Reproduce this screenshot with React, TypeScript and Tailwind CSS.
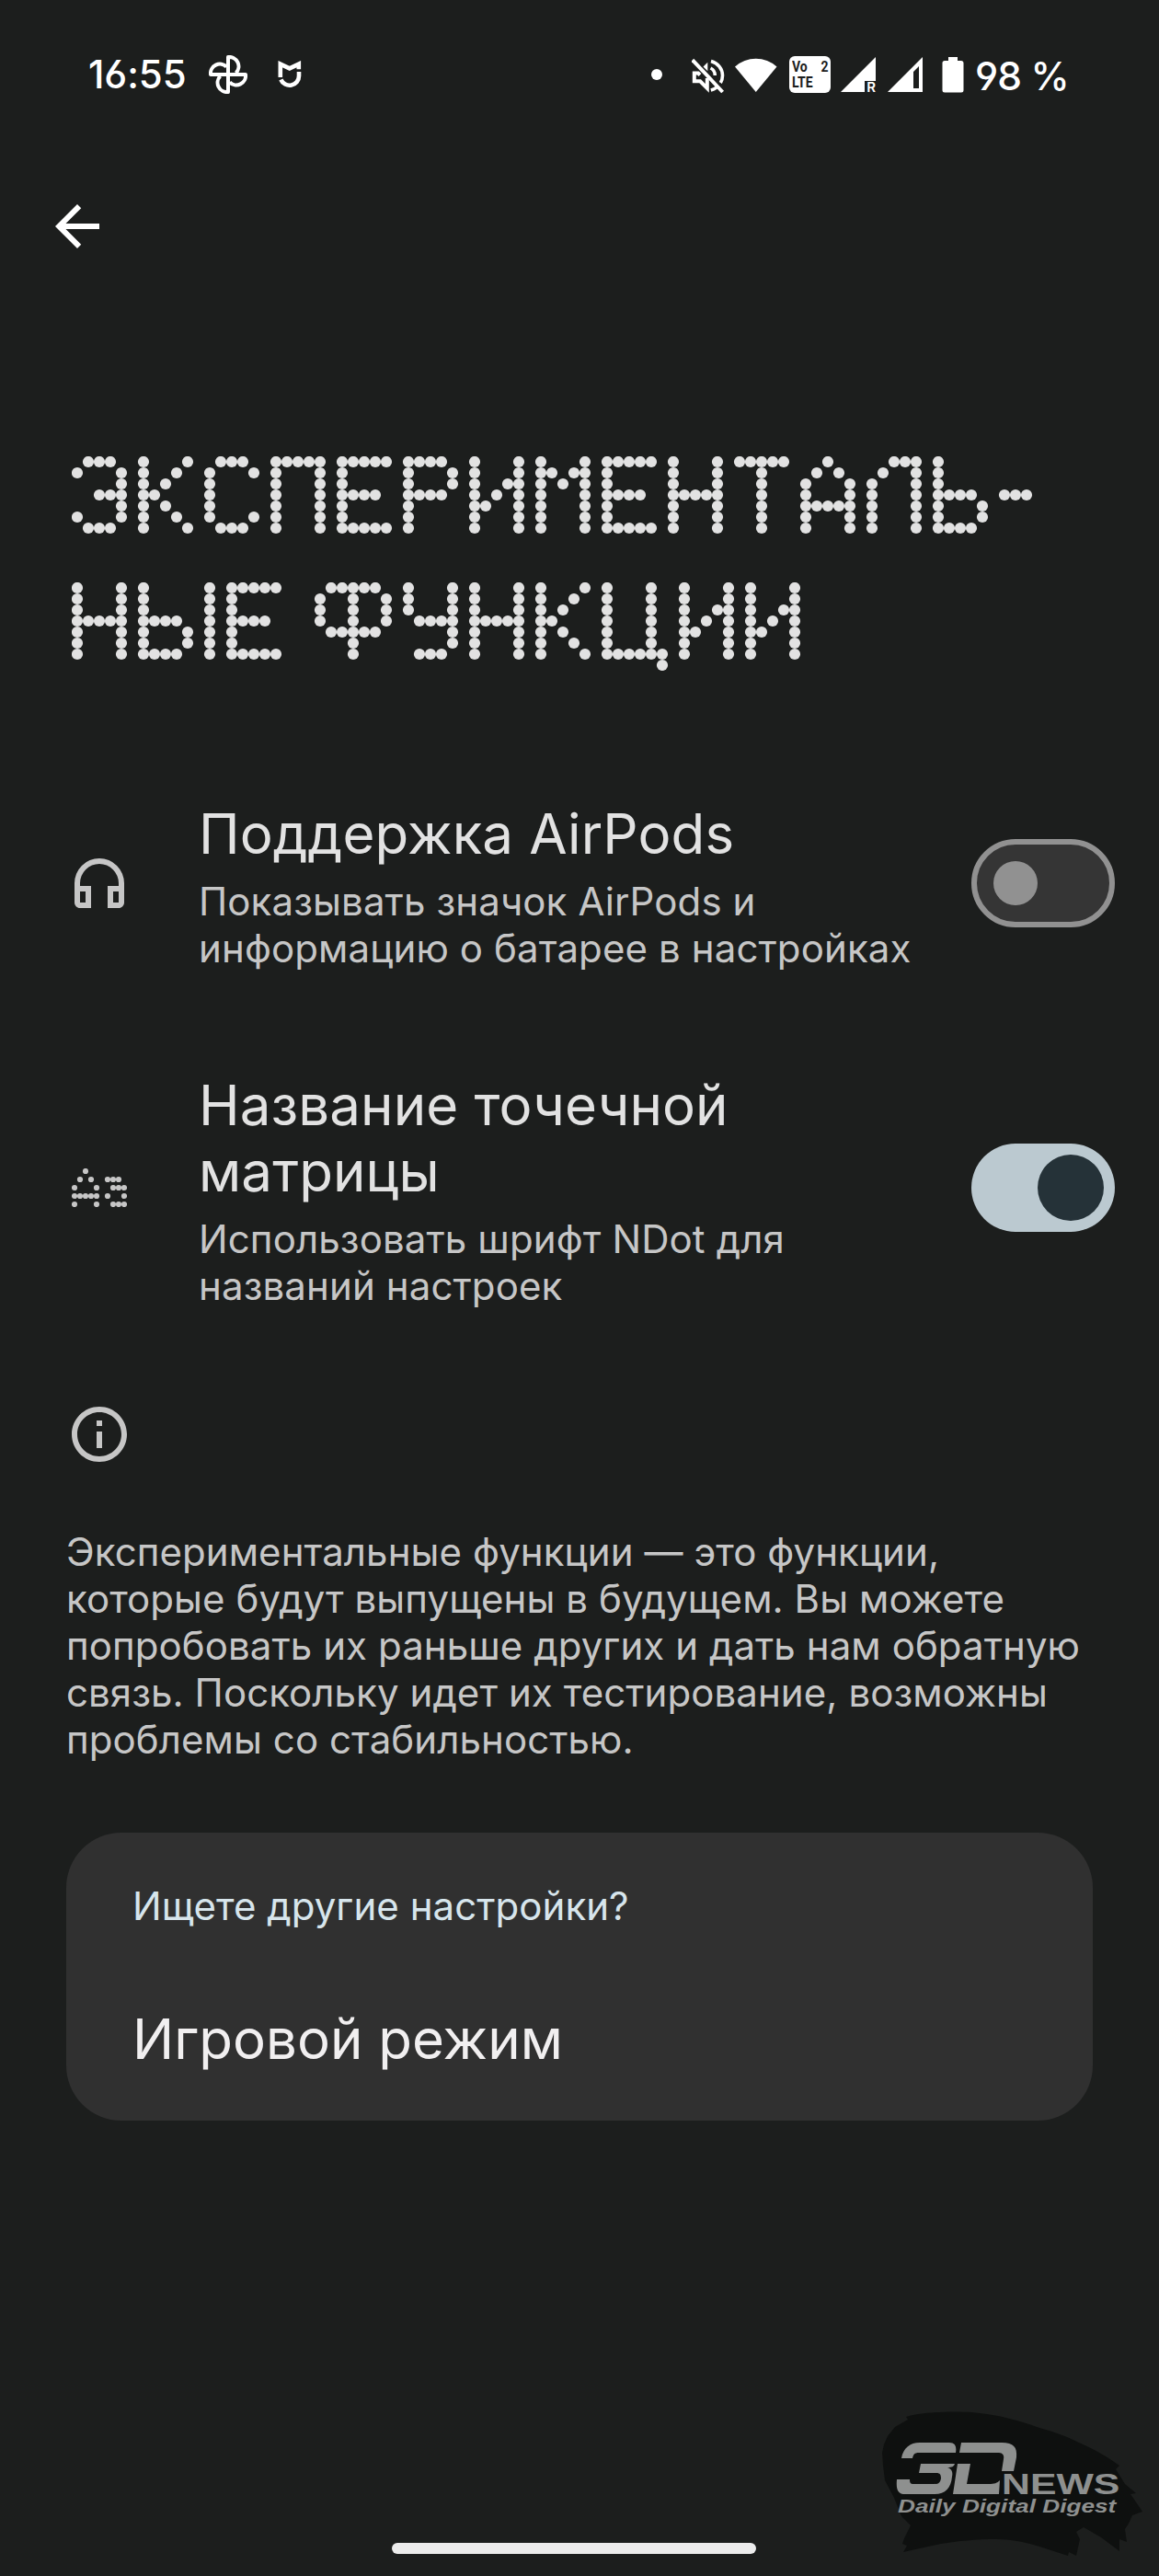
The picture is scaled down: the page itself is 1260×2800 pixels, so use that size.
import React from 'react'

// 5x7 dot font, only the letters used in the screen title
const glyphs: Record<string, string[]> = {
  'Э': ['.###.', '#...#', '....#', '..###', '....#', '#...#', '.###.'],
  'К': ['#...#', '#..#.', '#.#..', '##...', '#.#..', '#..#.', '#...#'],
  'С': ['.###.', '#...#', '#....', '#....', '#....', '#...#', '.###.'],
  'П': ['#####', '#...#', '#...#', '#...#', '#...#', '#...#', '#...#'],
  'Е': ['#####', '#....', '#....', '####.', '#....', '#....', '#####'],
  'Р': ['####.', '#...#', '#...#', '####.', '#....', '#....', '#....'],
  'И': ['#...#', '#...#', '#..##', '#.#.#', '##..#', '#...#', '#...#'],
  'М': ['#...#', '##.##', '#.#.#', '#...#', '#...#', '#...#', '#...#'],
  'Н': ['#...#', '#...#', '#...#', '#####', '#...#', '#...#', '#...#'],
  'Т': ['#####', '..#..', '..#..', '..#..', '..#..', '..#..', '..#..'],
  'А': ['..#..', '.#.#.', '#...#', '#...#', '#####', '#...#', '#...#'],
  'Л': ['..###', '.#..#', '#...#', '#...#', '#...#', '#...#', '#...#'],
  'Ь': ['#....', '#....', '#....', '####.', '#...#', '#...#', '####.'],
  'Ы': ['#.....#', '#.....#', '#.....#', '####..#', '#...#.#', '#...#.#', '####..#'],
  'Ф': ['.#####.', '#..#..#', '#..#..#', '#..#..#', '.#####.', '...#...', '...#...'],
  'У': ['#...#', '#...#', '#...#', '.####', '....#', '....#', '.###.'],
  'Ц': ['#...#.', '#...#.', '#...#.', '#...#.', '#...#.', '#...#.', '######', '.....#'],
  '-': ['...', '...', '...', '###'],
  ' ': ['.'],
}

const DotLine = ({ text }: { text: string }) => {
  let col = 0
  const dots: [number, number][] = []
  for (const ch of text) {
    const rows = glyphs[ch]
    rows.forEach((row, y) => row.split('').forEach((c, x) => c === '#' && dots.push([col + x, y])))
    col += rows[0].length + 1
  }
  return (
    <svg width={col * 12} height={96} viewBox={`0 0 ${col * 12} 96`} aria-hidden='true'>
      {dots.map(([x, y]) => <circle key={`${x}-${y}`} cx={x * 12 + 6} cy={y * 12 + 6} r={6.1} fill='#e2e2e2' />)}
    </svg>
  )
}

const ArrowBack = () => (
  <svg viewBox='0 0 24 24' className='size-[72px]' fill='#ffffff'>
    <path d='M20 11H7.83l5.59-5.59L12 4l-8 8 8 8 1.41-1.41L7.83 13H20v-2z' />
  </svg>
)

const Headphones = () => (
  <svg viewBox='0 0 24 24' className='size-[72px]' fill='#c6c6c6'>
    <path d='M12 3a9 9 0 0 0-9 9v7c0 1.1.9 2 2 2h4v-8H5v-1a7 7 0 0 1 14 0v1h-4v8h4c1.1 0 2-.9 2-2v-7a9 9 0 0 0-9-9zM7 15v4H5v-4h2zm12 4h-2v-4h2v4z' />
  </svg>
)

const dotIcon = ['..#.......', '.#.#..###.', '#...#..###', '#####.#..#', '#...#..###']

const DotFont = () => (
  <svg viewBox='0 0 60 42' className='h-[42px] w-[60px]' fill='#c6c6c6'>
    {dotIcon.map((row, y) => row.split('').map((c, x) => c === '#' && (
      <circle key={`${x}-${y}`} cx={x * 6 + 3} cy={y * 9 + 3} r={3.1} />
    )))}
  </svg>
)

const Info = () => (
  <svg viewBox='0 0 24 24' className='size-[72px]' fill='#c6c6c6'>
    <path d='M11 7h2v2h-2zm0 4h2v6h-2zm1-9C6.48 2 2 6.48 2 12s4.48 10 10 10 10-4.48 10-10S17.52 2 12 2zm0 18c-4.41 0-8-3.59-8-8s3.59-8 8-8 8 3.59 8 8-3.59 8-8 8z' />
  </svg>
)

const Pinwheel = () => (
  <svg viewBox='0 0 42 42' className='size-[42px]' fill='none' stroke='#fff' strokeWidth='4' strokeLinejoin='round'>
    <path d='M21 21V2a10.2 10.2 0 0 1 8.5 17.3M21 21h19a10.2 10.2 0 0 1-17.3 8.5M21 21v19a10.2 10.2 0 0 1-8.5-17.3M21 21H2a10.2 10.2 0 0 1 17.3-8.5' />
  </svg>
)

const Mitten = () => (
  <svg viewBox='0 0 26 30' className='h-[30px] w-[26px]' fill='none' stroke='#fff' strokeWidth='4.6'>
    <path d='M2.8 18V3.6l10 4.8 10-4.8v5.6' />
    <path d='M23 12v4.5a10.2 10.2 0 0 1-19.6 4' />
  </svg>
)

const Muted = () => (
  <svg viewBox='0 0 36 40' className='h-10 w-9' fill='none' stroke='#fff' strokeWidth='3.6'>
    <path d='M2 16.5h5l2 2M2.8 14.5v10.8h6.4l7.6 7.6V22' strokeWidth='4' />
    <path d='M12.5 9.5l4.8-4.8v9.5z' fill='#fff' stroke='none' />
    <path d='M20.5 11c3 1.5 4.8 4.2 4.8 8M21 3.5c7.5 2 12.5 8.2 12.5 15.5 0 3-.8 5.7-2.2 8M20.8 35c2.4-.6 4.4-1.6 6.2-2.9' />
    <path d='M.8 2.2L33.6 37' strokeWidth='3.9' />
  </svg>
)

const Wifi = () => (
  <svg viewBox='0 0 46 38' className='h-[38px] w-[46px]' fill='#fff'>
    <path d='M0 10.5a34 34 0 0 1 45.5 0L22.75 38z' />
  </svg>
)

const SignalRoaming = () => (
  <svg viewBox='0 0 38 38' className='h-[38px] w-[38px]' fill='#fff'>
    <path d='M38 0v26H26v12H0z' />
  </svg>
)

const SignalPartial = () => (
  <svg viewBox='0 0 38 38' className='h-[38px] w-[38px]' fill='#fff'>
    <path fillRule='evenodd' d='M38 0v38H0zM34 10v24h-6V16z' />
  </svg>
)

const Battery = () => (
  <svg viewBox='0 0 24 40' className='h-10 w-6' fill='#fff'>
    <path d='M7 1h10v4h3.5A2.5 2.5 0 0 1 23.5 7.5v29.500A2.500 2.500 0 0 1 21 39.500H3A2.500 2.500 0 0 1 .5 37V7.500A2.500 2.500 0 0 1 3 5h4z' />
  </svg>
)

const Toggle = ({ on }: { on?: boolean }) => (
  on ? (
    <div className='flex h-24 w-39 items-center justify-end rounded-full bg-[#bbc9d0] pr-3'>
      <div className='size-18 rounded-full bg-[#253238]' />
    </div>
  ) : (
    <div className='flex h-24 w-39 items-center rounded-full border-6 border-[#919191] bg-[#353535] pl-[18px]'>
      <div className='size-12 rounded-full bg-[#919191]' />
    </div>
  )
)

type RowProps = { icon: React.ReactNode, title: string, lines: string[], on?: boolean }

const SettingRow = ({ icon, title, lines, on }: RowProps) => (
  <div className='flex items-center pl-[72px] pr-12'>
    <div className='w-36 shrink-0 pb-1.5'>
      <div className='flex w-[72px] justify-center'>{icon}</div>
    </div>
    <div className='flex flex-1 flex-col gap-3'>
      <p className='whitespace-pre-line text-[60px] leading-[72px] tracking-[0.12px] text-[#e2e2e2]'>{title}</p>
      <p className='whitespace-nowrap text-[42px] leading-[51px] tracking-[0.11px] text-[#c6c6c6]'>
        {lines.map((line) => <span key={line} className='block'>{line}</span>)}
      </p>
    </div>
    <div className='shrink-0 pb-1.5'><Toggle on={on} /></div>
  </div>
)

const StatusBar = () => (
  <div className='flex h-[160px] items-start pl-[96px] pt-[59px] text-white'>
    <div className='flex h-11 w-[612px] items-center'>
      <span className='w-[131px] whitespace-nowrap text-[42px] font-medium leading-[44px] tracking-[-0.1px] [font-feature-settings:"cv03","cv04"]'>16:55</span>
      <Pinwheel />
      <div className='ml-[33px]'><Mitten /></div>
    </div>
    <div className='flex h-11 items-center'>
      <div className='size-3 rounded-full bg-white' />
      <div className='ml-8 pt-[3px]'><Muted /></div>
      <div className='ml-[11px]'><Wifi /></div>
      <div className='ml-[13px] h-10 w-[45px] rounded-md bg-white px-[3px] pt-[3px] font-[family-name:Roboto] text-[16.5px] font-bold leading-[17px] text-[#1c1e1d]'>
        <div className='flex justify-between'>
          <span className='origin-left scale-x-[0.85]'>Vo</span>
          <span className='origin-right scale-x-[0.85]'>2</span>
        </div>
        <p className='w-fit origin-left scale-x-[0.85]'>LTE</p>
      </div>
      <div className='relative ml-[11px]'>
        <SignalRoaming />
        <span className='absolute -bottom-0.5 right-0 text-[15px] font-semibold leading-[15px]'>R</span>
      </div>
      <div className='ml-[13px]'><SignalPartial /></div>
      <div className='ml-[21px]'><Battery /></div>
      <span className='ml-[12px] whitespace-nowrap pt-[3px] text-[42.5px] font-medium leading-[44px] tracking-[-0.9px] [font-feature-settings:"cv03","cv04"]'>98 %</span>
    </div>
  </div>
)

const Watermark = () => (
  <div className='absolute left-[955px] top-[2618px]'>
    <svg viewBox='0 0 290 165' className='h-[165px] w-[290px]'>
      <path fill='#0e100f' d='M30 9C42 4 90 1 118 6c20 3 38 8 54 14 18 5 32 10 46 17 18 8 32 16 44 25l-4 4 10 16 12 10-6 1 13 19-11 4-4 9-4 6 2 14-8-3v13l-20-15-19-11-8 5 4 8-4 18-8-4-1 4-34-11c-14-4-28-7-44-7-22 0-42 2-60 5l-41 9 4-7-5-2 2-6 7-14-10-10-8-20L7 78 5 62 4 48l2-9 4-9 8-10 14-8z' />
      <g fill='#8e908f'>
        <path d='M25 54c2-11 9-17 20-17h32c7 0 8 5 7 11H44c-5 0-6 2-7 6zM46 60h37c-1 3-3 4-8 4 5 2 6 5 5 10-1 12-7 19-19 19H29c-8 0-10-5-9-16h14c0 4 1 5 4 5h23c5 0 6-2 7-6 0-4-1-6-5-6H44z' />
        <path d='M90 37h44c13 0 17 5 16 16l-3 15h-13l2-13c1-4-1-7-5-7H88zM86 60h14l-4 22h24c6 0 9-1 12-4l-1 15H81z' />
      </g>
    </svg>
    <span className='absolute left-[134px] top-[66px] origin-left scale-x-[1.38] whitespace-nowrap font-[family-name:Liberation_Sans] text-[31px] font-bold leading-[34px] text-[#8e908f]'>NEWS</span>
    <span className='absolute left-[21px] top-[94px] origin-left scale-x-[1.31] whitespace-nowrap font-[family-name:Liberation_Sans] text-[20px] font-bold italic leading-[24px] text-[#8e908f]'>Daily Digital Digest</span>
  </div>
)

const App = () => {
  return (
    <div className='relative h-[2800px] w-[1260px] overflow-hidden bg-[#1c1e1d] font-["Inter",sans-serif]'>
      <StatusBar />
      <div className='flex h-[172px] items-center pl-12'>
        <ArrowBack />
      </div>
      <h1 className='flex flex-col gap-[41px] pl-[78px] pt-[164px]' aria-label='Экспериментальные функции'>
        <DotLine text='ЭКСПЕРИМЕНТАЛЬ-' />
        <DotLine text='НЫЕ ФУНКЦИИ' />
      </h1>
      <div className='flex flex-col gap-[109px] pt-[141px]'>
        <SettingRow icon={<Headphones />} title='Поддержка AirPods' lines={['Показывать значок AirPods и', 'информацию о батарее в настройках']} />
        <SettingRow on icon={<DotFont />} title={'Название точечной\nматрицы'} lines={['Использовать шрифт NDot для', 'названий настроек']} />
      </div>
      <div className='pl-[72px] pt-[100px]'>
        <Info />
        <p className='whitespace-pre-line pt-[66px] text-[42px] leading-[51px] tracking-[0.07px] text-[#c6c6c6]'>
          {'Экспериментальные функции — это функции,\nкоторые будут выпущены в будущем. Вы можете\nпопробовать их раньше других и дать нам обратную\nсвязь. Поскольку идет их тестирование, возможны\nпроблемы со стабильностью.'}
        </p>
      </div>
      <div className='mx-[72px] mt-[76px] flex h-[313px] flex-col gap-[83px] rounded-[60px] bg-[#303030] px-[72px] pt-[54px]'>
        <p className='text-[42px] leading-[51px] tracking-[0.05px] text-[#d7e5ec]'>Ищете другие настройки?</p>
        <p className='text-[60px] leading-[72px] text-[#f1eff0]'>Игровой режим</p>
      </div>
      <Watermark />
      <div className='absolute left-[426px] top-[2764px] h-3 w-[396px] rounded-full bg-[#ececec]' />
    </div>
  )
}

export default App
